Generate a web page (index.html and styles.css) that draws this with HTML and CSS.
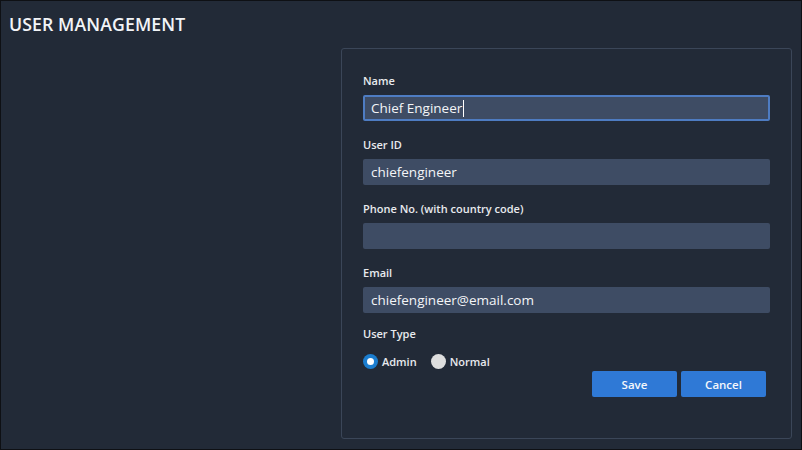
FILE: index.html
```html
<!DOCTYPE html>
<html>
<head>
<meta charset="utf-8">
<link rel="stylesheet" href="styles.css">
</head>
<body>
<div class="frame">
  <h1 class="title">USER MANAGEMENT</h1>
  <div class="panel">
    <div class="field">
      <div class="label">Name</div>
      <div class="input focused">Chief Engineer<span class="caret"></span></div>
    </div>
    <div class="field">
      <div class="label">User ID</div>
      <div class="input">chiefengineer</div>
    </div>
    <div class="field">
      <div class="label">Phone No. (with country code)</div>
      <div class="input"></div>
    </div>
    <div class="field last">
      <div class="label">Email</div>
      <div class="input">chiefengineer@email.com</div>
    </div>
    <div class="field">
      <div class="label">User Type</div>
      <div class="radios">
        <span class="radio checked"></span><span class="rlabel">Admin</span>
        <span class="radio"></span><span class="rlabel">Normal</span>
      </div>
    </div>
    <div class="actions">
      <button class="btn">Save</button>
      <button class="btn">Cancel</button>
    </div>
  </div>
</div>
</body>
</html>
```
FILE: styles.css
```css
* { box-sizing: border-box; }
html, body { margin: 0; padding: 0; background: #222a37; }
body { font-family: "Open Sans", "Noto Sans", sans-serif; }
.frame {
  width: 802px;
  height: 450px;
  border: 1px solid #0e1014;
  background: #222a37;
  overflow: hidden;
}
.title {
  margin: 0;
  padding: 13px 0 0 8px;
  height: 47px;
  font-size: 17.7px;
  font-weight: 600;
  color: #f2f4f7;
  letter-spacing: 0.1px;
  line-height: 20px;
}
.panel {
  margin-left: 340px;
  width: 451px;
  height: 391px;
  border: 1px solid #3b4658;
  border-radius: 3px;
  padding: 24px 21px 0 21px;
}
.field { margin-bottom: 16px; }
.field.last { margin-bottom: 13px; }
.label {
  font-size: 11px;
  font-weight: 600;
  line-height: 16px;
  color: #e8eaee;
  margin-bottom: 6px;
}
.input {
  height: 26px;
  background: #3e4c64;
  border-radius: 2px;
  color: #f3f5f8;
  font-size: 13.5px;
  font-weight: 500;
  line-height: 26px;
  padding: 0 8px;
}
.input.focused {
  border: 2px solid #4e7cc2;
  line-height: 22px;
  padding: 0 6px;
}
.caret {
  display: inline-block;
  width: 1px;
  height: 17px;
  background: #ffffff;
  vertical-align: -4px;
  margin-left: 1px;
}
.radios {
  display: flex;
  align-items: center;
  height: 22px;
  padding-top: 4px;
}
.radio {
  width: 15px;
  height: 15px;
  border-radius: 50%;
  background: #dedede;
  margin-right: 4px;
  position: relative;
}
.radio.checked { background: #1b7dcf; }
.radio.checked::after {
  content: "";
  position: absolute;
  left: 4px; top: 4px;
  width: 7px; height: 7px;
  border-radius: 50%;
  background: #ffffff;
}
.rlabel {
  font-size: 11px;
  font-weight: 600;
  color: #e8eaee;
  margin-right: 14px;
}
.actions {
  display: flex;
  justify-content: flex-end;
  gap: 4px;
  margin-top: -15px;
  padding-right: 4px;
}
.btn {
  width: 85px;
  height: 26px;
  border: none;
  border-radius: 2px;
  background: #2f79d6;
  color: #f4f7fb;
  font-family: inherit;
  font-size: 11.5px;
  font-weight: 600;
  padding: 0;
}
```
